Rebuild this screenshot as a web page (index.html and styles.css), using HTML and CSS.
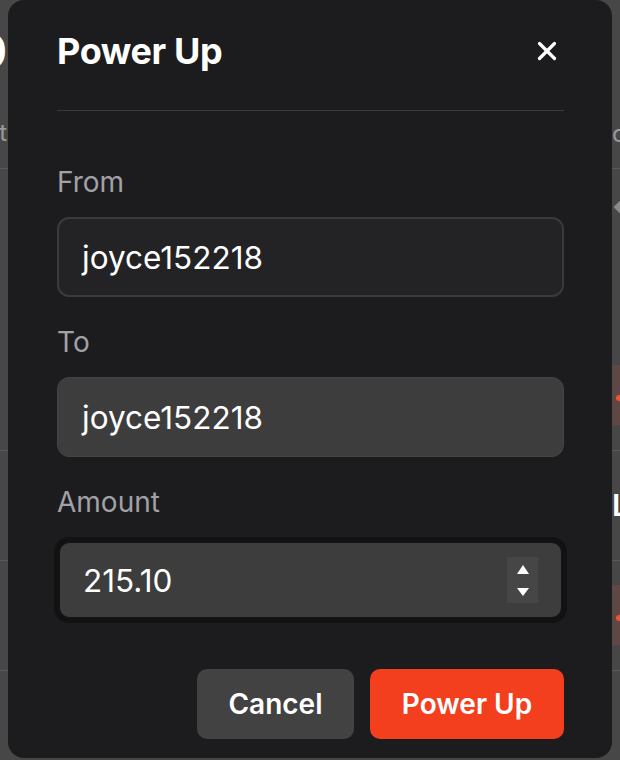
FILE: index.html
```html
<!DOCTYPE html>
<html lang="en">
<head>
<meta charset="utf-8">
<title>Power Up</title>
<link rel="stylesheet" href="styles.css">
</head>
<body>
<div class="bg">
  <div class="bg-row row1">
    <div class="cell-left">
      <div class="stack">
        <span class="big-zero">0</span>
        <span class="col-t">t</span>
      </div>
    </div>
    <div class="cell-right">
      <span class="col-c">c</span>
    </div>
  </div>
  <div class="bg-row row2">
    <div class="cell-left"></div>
    <div class="cell-right">
      <div class="stack">
        <span class="diamond"></span>
        <span class="red-block"><span class="dot"></span></span>
      </div>
    </div>
  </div>
  <div class="bg-row row3">
    <div class="cell-left"></div>
    <div class="cell-right"><span class="col-l">L</span></div>
  </div>
  <div class="bg-row row4">
    <div class="cell-left"></div>
    <div class="cell-right">
      <span class="red-block second"><span class="dot"></span></span>
    </div>
  </div>
  <div class="bg-row row5"></div>
</div>

<div class="modal">
  <div class="modal-header">
    <h2 class="modal-title">Power Up</h2>
    <button class="close-btn" aria-label="Close">
      <svg width="20" height="20" viewBox="0 0 20 20" fill="none" stroke="#ffffff" stroke-width="3.2" stroke-linecap="round">
        <line x1="2.5" y1="2.5" x2="17.5" y2="17.5"/>
        <line x1="17.5" y1="2.5" x2="2.5" y2="17.5"/>
      </svg>
    </button>
  </div>
  <div class="form">
    <div class="field">
      <label class="label">From</label>
      <div class="input input-outline">joyce152218</div>
    </div>
    <div class="field">
      <label class="label">To</label>
      <div class="input input-filled">joyce152218</div>
    </div>
    <div class="field">
      <label class="label">Amount</label>
      <div class="input input-focus">
        <span class="value">215.10</span>
        <span class="spinner">
          <svg width="12" height="9" viewBox="0 0 12 9"><polygon points="6,0 12,9 0,9" fill="#ffffff"/></svg>
          <svg width="12" height="8" viewBox="0 0 12 8"><polygon points="0,0 12,0 6,8" fill="#ffffff"/></svg>
        </span>
      </div>
    </div>
  </div>
  <div class="actions">
    <button class="btn btn-cancel">Cancel</button>
    <button class="btn btn-primary">Power Up</button>
  </div>
</div>
</body>
</html>
```

FILE: styles.css
```css
* { box-sizing: border-box; }

html, body {
  margin: 0;
  padding: 0;
}

body {
  width: 620px;
  height: 760px;
  overflow: hidden;
  background: #474747;
  font-family: Inter, "Liberation Sans", sans-serif;
  position: relative;
}

/* background page behind the modal */
.bg {
  display: flex;
  flex-direction: column;
  width: 620px;
  height: 760px;
}

.bg-row {
  display: flex;
  justify-content: space-between;
  border-bottom: 1px solid #5a5a5a;
}

.row1 { height: 169px; }
.row2 { height: 282px; }
.row3 { height: 110px; }
.row4 { height: 110px; }
.row5 { flex: 1; border-bottom: none; }

.cell-left {
  width: 8px;
  overflow: hidden;
  display: flex;
  justify-content: flex-end;
}

.cell-right {
  width: 8px;
  overflow: hidden;
  display: flex;
  justify-content: flex-start;
}

.stack {
  display: flex;
  flex-direction: column;
  align-items: flex-end;
}

.cell-right .stack { align-items: flex-start; }

.big-zero {
  margin-top: 29px;
  margin-right: 1px;
  font-size: 46px;
  line-height: 44px;
  font-weight: 700;
  color: #ffffff;
}

.col-t {
  margin-top: 48px;
  margin-right: 1px;
  font-size: 24px;
  line-height: 24px;
  color: #9a9a9a;
}

.col-c {
  margin-top: 122px;
  font-size: 24px;
  line-height: 24px;
  color: #9a9a9a;
}

.diamond {
  display: block;
  width: 12px;
  height: 12px;
  margin-top: 32px;
  margin-left: 4px;
  background: #8a8a8a;
  transform: rotate(45deg);
}

.red-block {
  display: block;
  position: relative;
  width: 40px;
  height: 60px;
  margin-top: 152px;
  background: #5e4845;
}

.red-block.second { margin-top: 24px; }

.dot {
  position: absolute;
  left: 4px;
  top: 30px;
  width: 6px;
  height: 6px;
  border-radius: 50%;
  background: #f4502f;
}

.col-l {
  margin-top: 39px;
  font-size: 30px;
  line-height: 30px;
  font-weight: 600;
  color: #ffffff;
}

/* modal */
.modal {
  position: absolute;
  top: 0;
  left: 8px;
  width: 604px;
  height: 758px;
  border-radius: 16px;
  background: #1c1c1e;
  padding: 0 48px 0 49px;
  display: flex;
  flex-direction: column;
}

.modal-header {
  display: flex;
  align-items: center;
  justify-content: space-between;
  padding-top: 29px;
  padding-bottom: 37px;
  border-bottom: 1px solid #38383d;
}

.modal-title {
  margin: 0;
  font-size: 36px;
  line-height: 44px;
  font-weight: 700;
  color: #ffffff;
  letter-spacing: -0.4px;
}

.close-btn {
  display: flex;
  align-items: center;
  justify-content: center;
  width: 20px;
  height: 20px;
  padding: 0;
  margin-right: 7px;
  border: none;
  background: transparent;
}

.form {
  display: flex;
  flex-direction: column;
  gap: 29px;
  padding-top: 55px;
}

.field {
  display: flex;
  flex-direction: column;
}

.label {
  font-size: 28px;
  line-height: 32px;
  color: #a1a1a6;
  margin-bottom: 19px;
}

.input {
  display: flex;
  align-items: center;
  height: 80px;
  padding-left: 25px;
  font-size: 31.5px;
  color: #ffffff;
  border-radius: 12px;
}

.input-outline {
  background: #232326;
  border: 2px solid #3a3a3e;
  padding-left: 23px;
}

.input-filled {
  background: #3d3d3d;
  border: 1px solid #434343;
  padding-left: 24px;
}

.input-focus {
  margin-top: 3px;
  background: #3d3d3d;
  border: 3px solid #121212;
  box-shadow: 0 0 0 3px #121212;
  padding-left: 23px;
  padding-right: 23px;
  justify-content: space-between;
}

.spinner {
  display: flex;
  flex-direction: column;
  align-items: center;
  justify-content: center;
  gap: 14px;
  width: 31px;
  height: 46px;
  background: #464646;
}

.spinner svg { display: block; }

.actions {
  display: flex;
  justify-content: flex-end;
  gap: 16px;
  margin-top: 49px;
}

.btn {
  height: 70px;
  border: none;
  border-radius: 10px;
  font-family: inherit;
  font-size: 28px;
  font-weight: 600;
  color: #ffffff;
}

.btn-cancel {
  width: 157px;
  background: #424242;
}

.btn-primary {
  width: 194px;
  background: #f43f1f;
}
```
